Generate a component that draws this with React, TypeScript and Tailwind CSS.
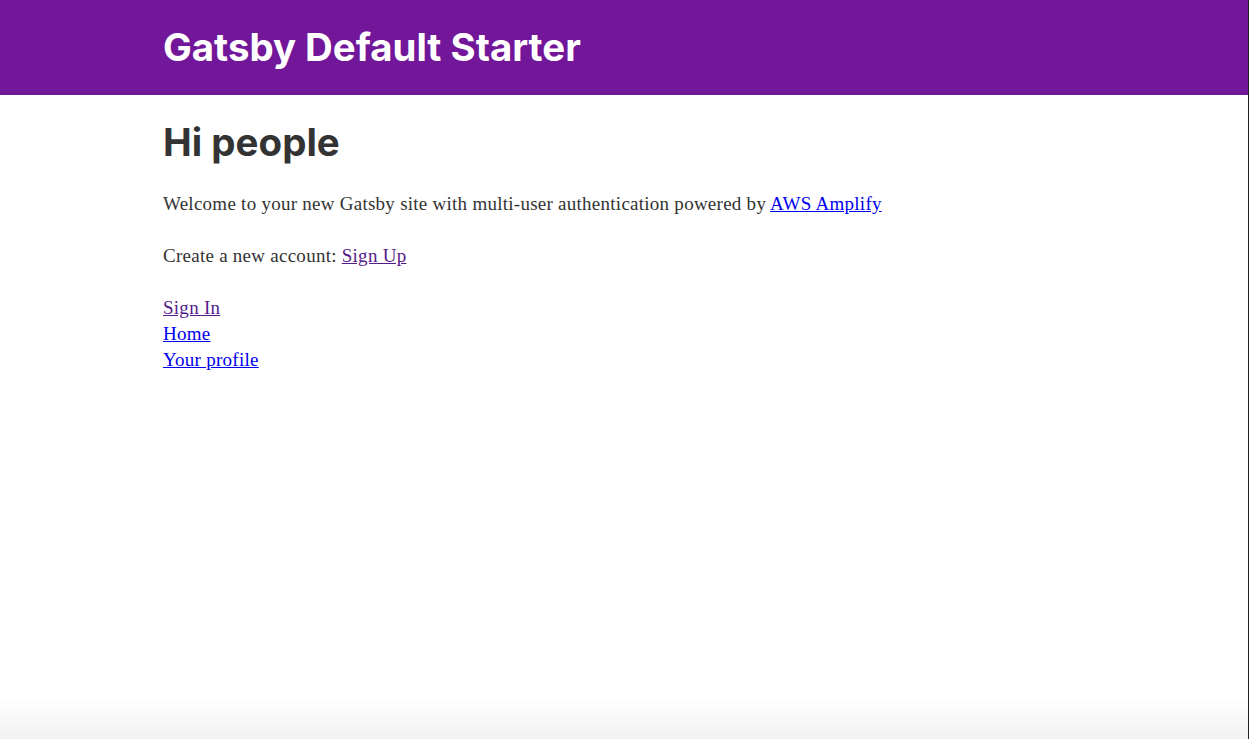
export default function App() {
  const serif = { fontFamily: '"Liberation Serif", serif' };
  return (
    <div className="flex h-[739px] w-[1249px] overflow-hidden bg-white">
      <div className="flex w-[1248px] flex-col">
        <header className="mb-[26px] bg-[#72179a]">
          <div className="mx-auto max-w-[960px] px-[19px] py-[26px]">
            <h1 className="m-0 font-['Inter',sans-serif] text-[38.4px] font-bold leading-[43px] text-white">
              Gatsby Default Starter
            </h1>
          </div>
        </header>
        <main className="mx-auto w-[960px] flex-1 px-[19px]">
          <h1 className="mb-[26px] font-['Inter',sans-serif] text-[38.5px] font-bold leading-[43px] text-[#333333]">
            Hi people
          </h1>
          <div className="pt-[1px] text-[19px] leading-[26px] tracking-[0.26px] text-[#333333]" style={serif}>
            <p className="mb-[26px]">
              Welcome to your new Gatsby site with multi-user authentication powered by{' '}
              <a href="#" className="text-[#0000ee] underline">AWS Amplify</a>
            </p>
            <p className="mb-[26px]">
              Create a new account:{' '}
              <a href="#" className="text-[#551a8b] underline">Sign Up</a>
            </p>
            <div className="flex flex-col items-start">
              <a href="#" className="text-[#551a8b] underline">Sign In</a>
              <a href="#" className="text-[#0000ee] underline">Home</a>
              <a href="#" className="text-[#0000ee] underline">Your profile</a>
            </div>
          </div>
        </main>
        <div className="h-[40px] bg-gradient-to-b from-white to-[#f1f1f1]" />
      </div>
      <div className="w-px bg-[#222222]" />
    </div>
  );
}
